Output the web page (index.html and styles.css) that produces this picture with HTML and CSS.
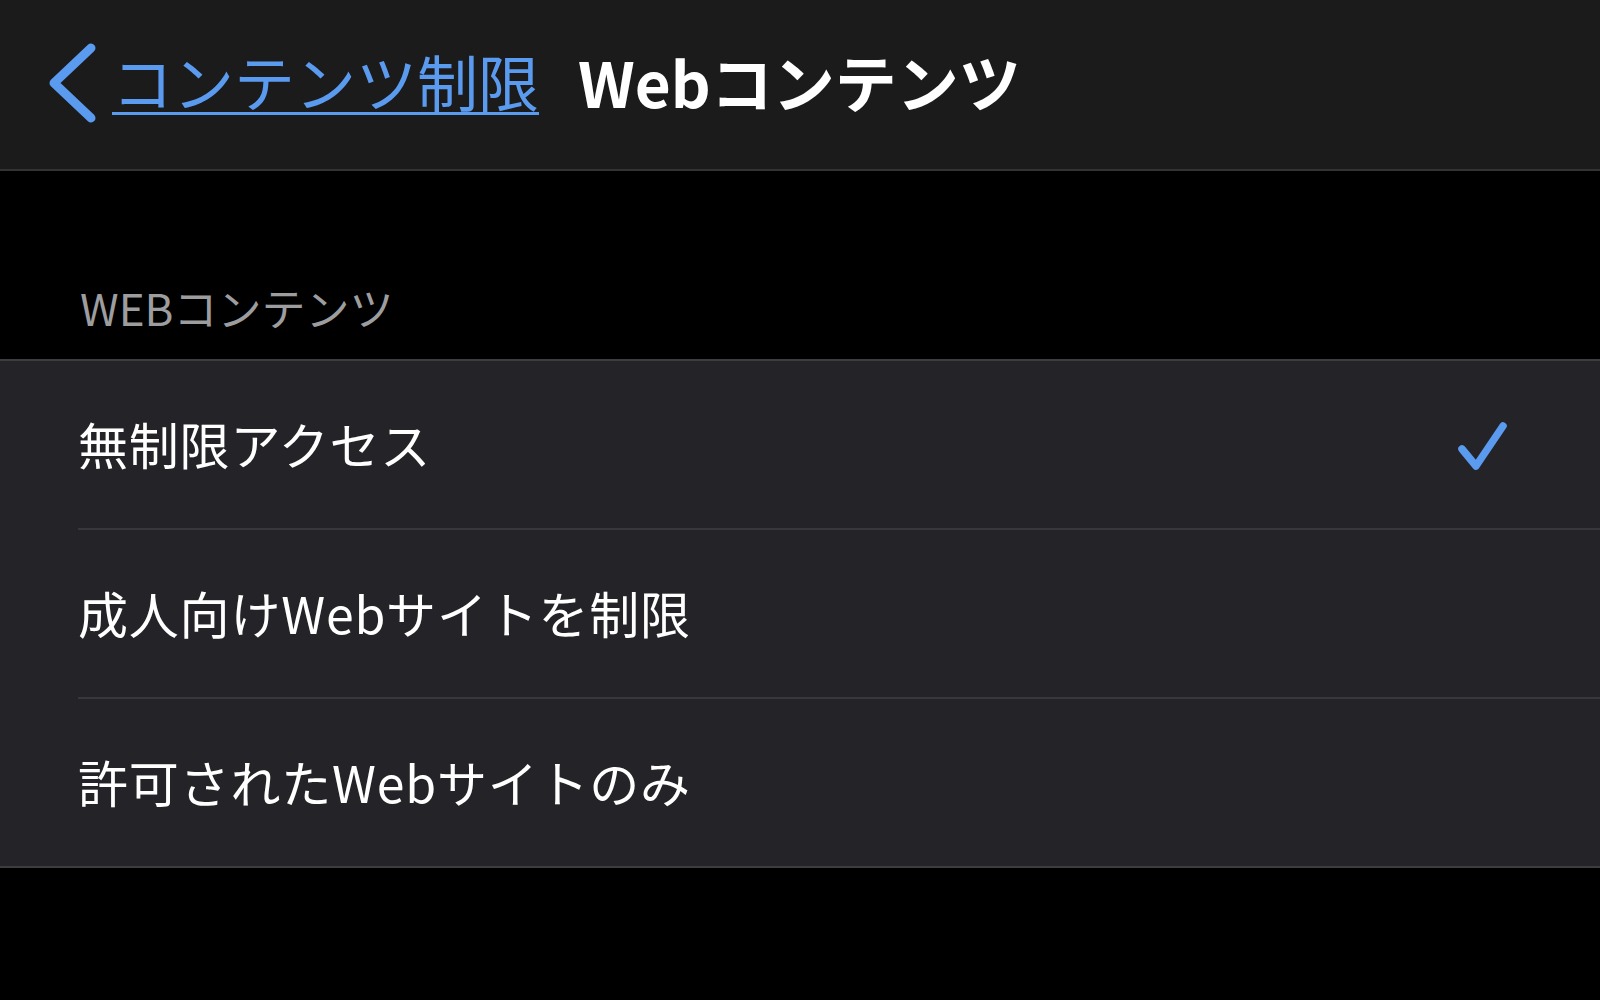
FILE: index.html
```html
<!DOCTYPE html>
<html lang="ja">
<head>
  <meta charset="UTF-8" />
  <meta name="viewport" content="width=device-width, initial-scale=1.0"/>
  <title>Webコンテンツ</title>
  <link rel="stylesheet" href="styles.css">
</head>
<body>
  <header class="navbar">
    <a class="back" href="#">
      <svg class="chevron" width="50" height="80" viewBox="0 0 50 80">
        <path d="M43 5 L6 40 L43 75" fill="none" stroke="#5a9bf0" stroke-width="9" stroke-linecap="round" stroke-linejoin="round"/>
      </svg>
      <span class="back-label">コンテンツ制限</span>
    </a>
    <h1 class="title">Webコンテンツ</h1>
  </header>

  <div class="section-title">WEBコンテンツ</div>

  <ul class="list">
    <li class="row">
      <span>無制限アクセス</span>
      <svg class="check" width="52" height="52" viewBox="0 0 52 52">
        <path d="M6 29 L20 46 L47 6" fill="none" stroke="#5a9bf0" stroke-width="7.5" stroke-linecap="round" stroke-linejoin="round"/>
      </svg>
    </li>
    <li class="row"><span>成人向けWebサイトを制限</span></li>
    <li class="row"><span>許可されたWebサイトのみ</span></li>
  </ul>
</body>
</html>
```

FILE: styles.css
```css
body {
  margin: 0;
  background: #000;
  color: #fff;
  font-family: "Noto Sans CJK JP", "Noto Sans", sans-serif;
}

.navbar {
  display: flex;
  align-items: center;
  box-sizing: border-box;
  height: 171px;
  padding: 0 0 8px 48px;
  background: #1b1b1b;
  border-bottom: 2px solid #333;
}

.back {
  display: flex;
  align-items: center;
  gap: 14px;
  color: #5a9bf0;
  text-decoration: none;
}

.chevron {
  margin-top: 4px;
}

.back-label {
  font-size: 61px;
  line-height: 1;
  text-decoration: underline;
  text-decoration-thickness: 3px;
  text-underline-offset: 5px;
}

.title {
  margin: 0 0 0 39px;
  font-size: 62px;
  font-weight: bold;
  line-height: 1;
  color: #fff;
}

.section-title {
  padding: 112px 0 28px 80px;
  height: 48px;
  font-size: 44px;
  line-height: 48px;
  color: #9d9d9f;
}

.list {
  margin: 0;
  padding: 0;
  list-style: none;
  background: #242428;
  border-top: 2px solid #3d3d40;
  border-bottom: 2px solid #3d3d40;
}

.row {
  display: flex;
  align-items: center;
  justify-content: space-between;
  height: 167px;
  margin-left: 78px;
  padding-right: 92px;
  font-size: 50px;
  letter-spacing: 0.8px;
  border-bottom: 2px solid #38383b;
}

.row span {
  margin-top: -4px;
}

.row:last-child {
  border-bottom: none;
}

.check {
  display: block;
  margin-top: 2px;
}
```
